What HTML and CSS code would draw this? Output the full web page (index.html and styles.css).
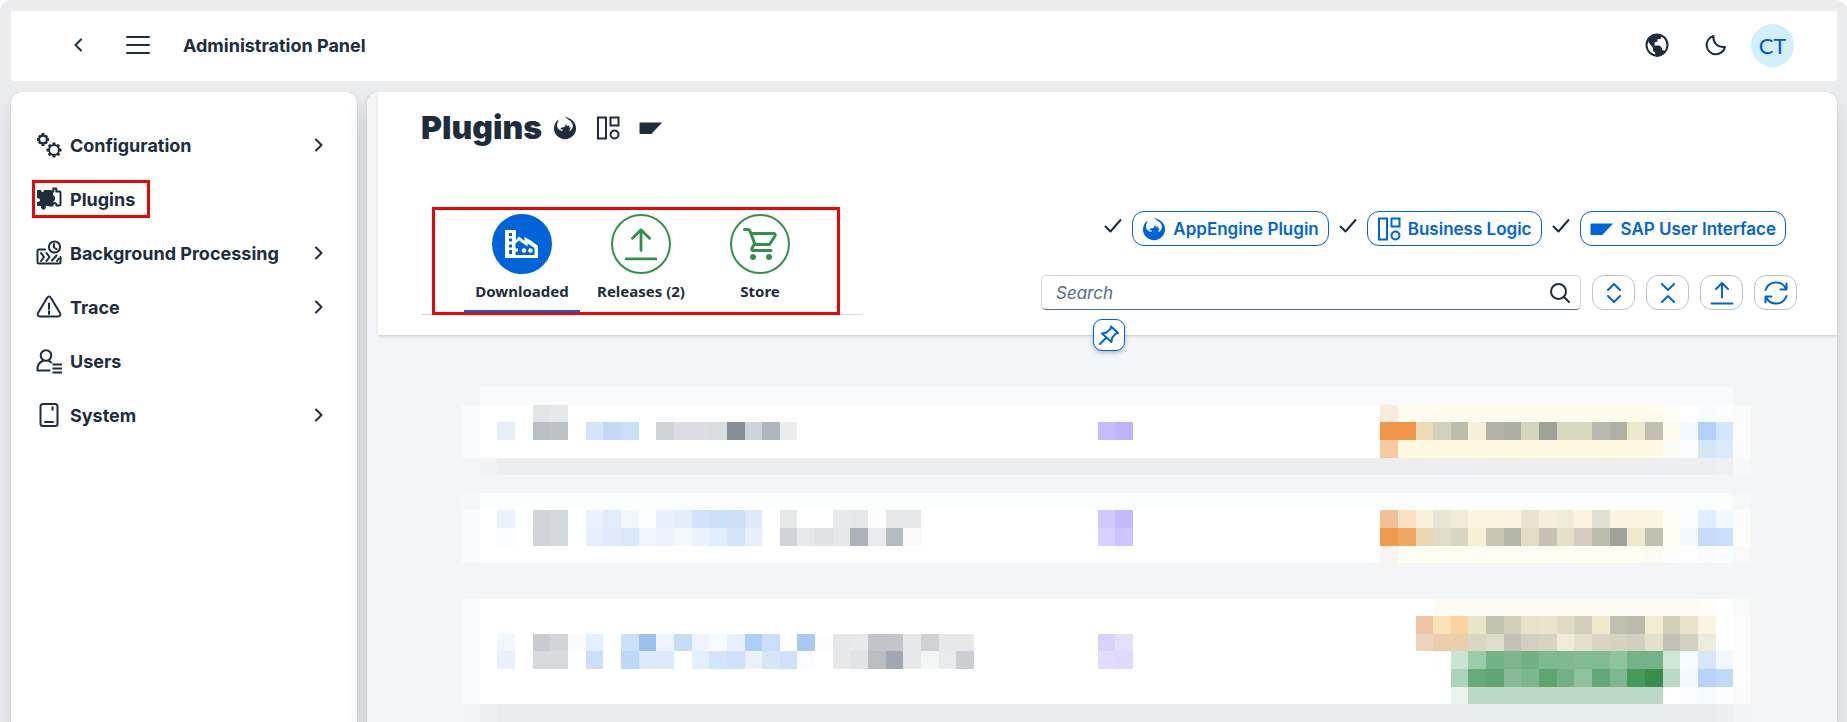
FILE: index.html
```html
<!DOCTYPE html>
<html lang="en">
<head>
<meta charset="utf-8">
<title>Administration Panel</title>
<link rel="stylesheet" href="styles.css">
</head>
<body>
<svg class="defs" aria-hidden="true">
  <symbol id="i-chevron" viewBox="0 0 10 14"><path d="M2 1.500l5.500 5.500L2 12.500"/></symbol>
  <symbol id="i-check" viewBox="0 0 18 16"><path d="M1.500 8.500l5 5L16.500 2"/></symbol>
  <symbol id="i-engine" viewBox="0 0 24 24"><path d="M5.500 3.500C2.700 5.500 1 8.800 1 12.500a11 10.700 0 0 0 22 0c0-4.300-2-7.300-5-9.200C15.800 2 13.500 1.800 12 .3c.7 2.200 2.700 2.700 4.500 4 2.600 1.800 3.800 4.200 3.200 7-.4 1.700-1.500 3-3.200 4l.3-2.300 1.200-1.500-1.700.2.200-2.700-1.900 1.200-1.600-2-1.500 2.700-3 .6-1.500 2 2.700-.3-.3 1.800C6.500 14.500 4.400 12.800 4 10c-.3-2.300.6-4.500 3-6.800L4.500 5.500z"/></symbol>
  <symbol id="i-blocks" viewBox="0 0 24 24"><path d="M2 1.500h8v21H2zM14.500 1.500h8v8h-8z"/><circle cx="18.500" cy="18.500" r="4"/></symbol>
  <symbol id="i-sap" viewBox="0 0 24 24"><path d="M1.500 6.500h21q.8 0 .2.600L13 17.300q-.5.700-1.300.7H1.500q-1 0-1-1v-9.500q0-1 1-1z"/></symbol>
  <symbol id="i-upload" viewBox="0 0 24 24"><path d="M12 16.500V2M6 8l6-6 6 6M1.500 22.500h21"/></symbol>
</svg>

<div class="shell">
  <header class="topbar">
    <button class="icon-btn back" aria-label="Back"><svg class="stroke flip" width="10" height="14"><use href="#i-chevron"/></svg></button>
    <button class="icon-btn menu" aria-label="Menu"><svg class="stroke" width="24" height="20" viewBox="0 0 24 20"><path d="M1 2h22M1 10h22M1 18h22"/></svg></button>
    <span class="topbar-title">Administration Panel</span>
    <button class="icon-btn globe" aria-label="Language"><svg width="24" height="24" viewBox="0 0 24 24"><circle class="stroke" cx="12" cy="12" r="10.500"/><path d="M3 8C5 3.500 9 1.500 14 1.500l2.500 2-1 2.500h-3v2.500l-3 1v3h5l2.500 2.500v2l2.500.5-1 3-4.500 3-3 .5-1-4.500-2-1.500v-3L3.500 9z"/></svg></button>
    <button class="icon-btn moon" aria-label="Dark theme"><svg class="stroke" width="22" height="22" viewBox="0 0 22 22"><path d="M8.500 2C8 8.500 12 13.500 20 13a9.300 9.300 0 1 1-11.500-11z"/></svg></button>
    <button class="avatar" aria-label="Account CT">CT</button>
  </header>

  <div class="columns">
    <nav class="sidebar" aria-label="Administration">
      <a class="nav-item" href="#configuration">
        <svg class="stroke" width="26" height="26" viewBox="0 0 26 26"><circle cx="7" cy="7.500" r="3.800"/><circle cx="18" cy="18" r="4.900"/><path class="teeth" d="M7 1v2M7 12v2M1 7.500h2M11 7.500h2M3 3.500l1.500 1.500M11 3.500L9.500 5M3 11.500L4.500 10M11 11.500L9.500 10M18 10.500V13M18 23v2.500M10.500 18H13M23 18h2.500M12.800 12.800l1.700 1.700M23.200 12.800l-1.700 1.700M12.800 23.200l1.700-1.700M23.200 23.200l-1.700-1.700"/></svg>
        <span>Configuration</span>
        <svg class="stroke more" width="10" height="14"><use href="#i-chevron"/></svg>
      </a>
      <a class="nav-item marked" href="#plugins" aria-current="page">
        <svg width="26" height="26" viewBox="0 0 26 26"><path d="M1 5q0-1 1-1h3q0 2 1.500 2T8 4h5q3 0 4 2v3l2 2v3l-2 2v4H9.500l.5 2-2.500 2L5 22v-2H2q-1 0-1-1v-3q3 0 3-2t-3-2z"/><path class="stroke" d="M13.500 5.500h3.800v-3h3v3h3q1.200 0 1.200 1.200V18q0 1.500-1.500 1.500h-2.500q0-2.500-2-2.500t-2 2.500h-3"/></svg>
        <span>Plugins</span>
      </a>
      <a class="nav-item" href="#background">
        <svg class="stroke" width="26" height="26" viewBox="0 0 26 26"><path d="M9 9.500H3Q1.500 9.500 1.500 11v11q0 1.500 1.500 1.500h20q1.500 0 1.500-1.500v-5"/><circle cx="18.500" cy="7" r="5.600"/><path d="M18 4v3.500l2.500 1.500M5 13l3 4-3 4M10.500 13l3 4-3 4M16 20.500l4.500-5M21 21l2-2.500"/></svg>
        <span>Background Processing</span>
        <svg class="stroke more" width="10" height="14"><use href="#i-chevron"/></svg>
      </a>
      <a class="nav-item" href="#trace">
        <svg class="stroke" width="26" height="26" viewBox="0 0 26 26"><path d="M11 4q2-2.800 4 0l9 15q1.400 3.500-2 3.500H4q-3.400 0-2-3.500zM13 9.500v5.500M13 17.300v2.700"/></svg>
        <span>Trace</span>
        <svg class="stroke more" width="10" height="14"><use href="#i-chevron"/></svg>
      </a>
      <a class="nav-item" href="#users">
        <svg class="stroke" width="26" height="26" viewBox="0 0 26 26"><circle cx="10" cy="7.500" r="5.300"/><path d="M13.500 22.500h-12q-.5-7.500 5.500-9.700M13 12.800q1.500.7 2.300 1.700"/><path class="lines" d="M16.500 16.500h9.500M16.500 20.500h9.500M16.500 24.500h9.500"/></svg>
        <span>Users</span>
      </a>
      <a class="nav-item" href="#system">
        <svg class="stroke" width="26" height="26" viewBox="0 0 26 26"><rect x="4.500" y="2" width="17" height="22" rx="2.500"/><path d="M9 20h8M16.500 5.200v2.600"/></svg>
        <span>System</span>
        <svg class="stroke more" width="10" height="14"><use href="#i-chevron"/></svg>
      </a>
    </nav>

    <main class="content">
      <section class="panel-head">
        <div class="title-row">
          <h1>Plugins</h1>
          <svg width="24" height="24"><use href="#i-engine"/></svg>
          <svg class="stroke sharp" width="24" height="24"><use href="#i-blocks"/></svg>
          <svg width="24" height="24"><use href="#i-sap"/></svg>
        </div>
        <div class="head-body">
          <div class="tabs" role="tablist">
            <button class="tab active" role="tab" aria-selected="true">
              <span class="disc"><svg width="34" height="30" viewBox="0 0 34 30"><path d="M0 1h11v10l3-3.500 5.500 4.500V8l7 4 6.500 5v12H0z"/><path class="hole" d="M4 4h3v3H4zM4 9.500h3v3H4zM4 15.500h3v3H4zM4 21h3v4H4zM10.500 14.500l3.500-3 8.500 6v-3l7 4.500v7H10.500z"/><path d="M9 19.500h4v3H9z"/><circle cx="19" cy="21.500" r="2.200"/><circle cx="25.500" cy="21.500" r="2.200"/></svg></span>
              <span>Downloaded</span>
            </button>
            <button class="tab" role="tab" aria-selected="false">
              <span class="disc"><svg class="stroke" width="34" height="34"><use href="#i-upload"/></svg></span>
              <span>Releases (2)</span>
            </button>
            <button class="tab" role="tab" aria-selected="false">
              <span class="disc"><svg width="34" height="34" viewBox="0 0 34 34"><path class="stroke" d="M1.500 2.500H5q1.500 0 2 1.500l5 13.500h14.500L32 9q.8-2.500-1.500-2.500H8M11 17.500l-2 4q-.8 2 1 2h18"/><circle cx="10" cy="30" r="3"/><circle cx="26" cy="30" r="3"/></svg></span>
              <span>Store</span>
            </button>
          </div>

          <div class="tools">
            <div class="filters">
              <svg class="stroke tick" width="18" height="16"><use href="#i-check"/></svg>
              <button class="pill"><svg width="24" height="24"><use href="#i-engine"/></svg>AppEngine Plugin</button>
              <svg class="stroke tick" width="18" height="16"><use href="#i-check"/></svg>
              <button class="pill"><svg class="stroke sharp" width="24" height="24"><use href="#i-blocks"/></svg>Business Logic</button>
              <svg class="stroke tick" width="18" height="16"><use href="#i-check"/></svg>
              <button class="pill"><svg width="24" height="24"><use href="#i-sap"/></svg>SAP User Interface</button>
            </div>
            <div class="actions">
              <div class="search">
                <input type="text" placeholder="Search" aria-label="Search">
                <button class="icon-btn" aria-label="Run search"><svg class="stroke" width="20" height="20" viewBox="0 0 20 20"><circle cx="8.500" cy="8.500" r="7.500"/><path d="M14 14l5 5"/></svg></button>
              </div>
              <button class="tool" aria-label="Expand all"><svg class="stroke" width="16" height="20" viewBox="0 0 16 20"><path d="M2 7l6-6 6 6M2 13l6 6 6-6"/></svg></button>
              <button class="tool" aria-label="Collapse all"><svg class="stroke" width="16" height="20" viewBox="0 0 16 20"><path d="M2 1l6 6 6-6M2 19l6-6 6 6"/></svg></button>
              <button class="tool" aria-label="Upload"><svg class="stroke" width="24" height="24"><use href="#i-upload"/></svg></button>
              <button class="tool" aria-label="Refresh"><svg class="stroke" width="24" height="24" viewBox="0 0 24 24"><path d="M1.500 9A11 11 0 0 1 22 8M22.500 2.500v6h-6M22.500 15A11 11 0 0 1 2 16M1.500 21.500v-6h6"/></svg></button>
            </div>
          </div>
        </div>
        <button class="pin" aria-label="Pin header"><svg class="stroke" width="20" height="20" viewBox="0 0 20 20"><path d="M1 19l6-6M12 1.500L19 8l-2.500.8-3.500 4L12.500 17 3 8.500 7.500 7.500l4-3.500z"/></svg></button>
      </section>
      <svg class="mosaic" viewBox="-1 0 73 19" preserveAspectRatio="none" role="img" aria-label="Plugin list"></svg>
    </main>
  </div>
</div>
<script src="mosaic.js"></script>
</body>
</html>
```
FILE: styles.css
```css
*, *::before, *::after { box-sizing: border-box; }
html { background: #fff; }
body {
  margin: 0;
  color: #1d2d3e;
  font-family: Inter, "Noto Sans", sans-serif;
  font-size: 18px;
}
button { font: inherit; color: inherit; background: none; border: 0; padding: 0; cursor: pointer; }
svg { display: block; flex: none; fill: currentColor; }
.stroke {
  fill: none;
  stroke: currentColor;
  stroke-width: 2;
  stroke-linecap: round;
  stroke-linejoin: round;
}
.sharp { stroke-linejoin: miter; }
.lines { stroke-linecap: butt; }
.teeth { stroke-width: 3; stroke-linecap: butt; }
.defs { position: absolute; width: 0; height: 0; }

.shell {
  height: 100vh;
  display: flex;
  flex-direction: column;
  gap: 11px;
  padding: 11px 10px 0 11px;
  overflow: hidden;
  background: #ebecee;
  border-radius: 12px 12px 0 0;
}

.topbar {
  position: relative;
  z-index: 1;
  display: flex;
  align-items: center;
  height: 70px;
  flex: none;
  padding: 0 43px 2px 62px;
  background: #fff;
  box-shadow: 0 0 0 11px #ebecee;
}
.icon-btn { display: flex; align-items: center; justify-content: center; }
.flip { transform: scaleX(-1); }
.menu { margin: 0 33px 0 43px; }
.topbar-title { font-weight: 700; }
.globe { margin-left: auto; }
.moon { margin: 0 24px 0 36px; }
.avatar {
  width: 43px;
  height: 43px;
  border-radius: 50%;
  background: #d1efff;
  color: #0057d2;
  font-family: Lato, sans-serif;
  font-size: 22px;
}

.columns { display: flex; gap: 10px; flex: 1; min-height: 0; }
.sidebar, .content {
  border-radius: 11px 11px 0 0;
  box-shadow: 0 0 2px rgba(34, 53, 72, .2), 0 16px 24px rgba(34, 53, 72, .14);
}
.sidebar { flex: none; width: 346px; padding: 26px 33px 0 25px; background: #fff; }
.nav-item {
  position: relative;
  display: flex;
  align-items: center;
  gap: 8px;
  height: 54px;
  color: inherit;
  font-weight: 700;
  text-decoration: none;
}
.more { margin-left: auto; }
.marked::after {
  content: "";
  position: absolute;
  left: -4px;
  top: 8px;
  width: 118px;
  height: 38px;
  border: 3px solid #eb0505;
}

.content { flex: 1; min-width: 0; padding-left: 11px; background: #f4f5f7; overflow: hidden; }
.panel-head {
  position: relative;
  padding: 16px 40px 20px 43px;
  background: #fff;
  border-bottom: 1px solid #d5d8dc;
  border-top-right-radius: 11px;
  box-shadow: 0 1px 3px rgba(34, 53, 72, .12);
}
.title-row { display: flex; align-items: center; gap: 19px; height: 40px; }
h1 { margin: 0 -8px 0 0; font-size: 32px; line-height: 40px; font-weight: 900; }
.head-body { display: flex; justify-content: space-between; margin-top: 59px; }

.tabs {
  position: relative;
  display: flex;
  gap: 3px;
  flex: none;
  width: 440px;
  height: 108px;
  padding-left: 43px;
  border-bottom: 1px solid #d5d8dc;
}
.tabs::after {
  content: "";
  position: absolute;
  left: 11px;
  top: 0;
  width: 408px;
  height: 108px;
  border: 3px solid #eb0505;
  pointer-events: none;
}
.tab {
  display: flex;
  flex-direction: column;
  align-items: center;
  gap: 7px;
  width: 116px;
  padding-top: 7px;
  border-bottom: 4px solid transparent;
  font-family: "Noto Sans", sans-serif;
  font-size: 15px;
  line-height: 20px;
  font-weight: 700;
}
.tab.active { border-bottom-color: #0064d9; }
.disc {
  display: flex;
  align-items: center;
  justify-content: center;
  width: 60px;
  height: 60px;
  border: 2px solid #30914c;
  border-radius: 50%;
  color: #30914c;
}
.tab.active .disc { background: #0064d9; border-color: #0064d9; color: #fff; }
.hole { fill: #0064d9; }
.tab path.stroke { stroke-width: 3; }

.tools { flex: 0 1 756px; padding-top: 4px; }
.filters { display: flex; align-items: center; justify-content: flex-end; gap: 10px; padding-right: 11px; }
.tick { margin-bottom: 6px; }
.pill {
  display: flex;
  align-items: center;
  gap: 7px;
  height: 35px;
  padding: 0 9px;
  border: 1px solid #0064d9;
  border-radius: 12px;
  color: #0064d9;
  font-size: 17px;
  font-weight: 600;
  white-space: nowrap;
}
.actions { display: flex; gap: 11px; margin-top: 29px; }
.search {
  display: flex;
  flex: 1;
  height: 35px;
  padding-right: 10px;
  border: 1px solid #d0d6dc;
  border-bottom-color: #556b81;
  border-radius: 5px;
}
.search input {
  flex: 1;
  min-width: 0;
  padding: 0 14px;
  border: 0;
  outline: 0;
  background: none;
  color: inherit;
  font: inherit;
  font-size: 17px;
}
.search input::placeholder { color: #556b82; font-style: italic; opacity: 1; }
.tool {
  display: flex;
  align-items: center;
  justify-content: center;
  width: 43px;
  height: 35px;
  border: 1px solid #bcc3ca;
  border-radius: 12px;
  color: #0064d9;
}
.pin {
  position: absolute;
  left: 50%;
  bottom: -16px;
  display: flex;
  align-items: center;
  justify-content: center;
  width: 32px;
  height: 32px;
  margin-left: -15px;
  border: 1px solid #0064d9;
  border-radius: 9px;
  background: #fff;
  color: #0064d9;
  box-shadow: 0 2px 4px rgba(34, 53, 72, .3);
}

.mosaic {
  width: calc(100% - 170px);
  height: 335px;
  margin: 51px 86px 0 84px;
  shape-rendering: crispEdges;
}
```
FILE: mosaic.js
```javascript
// One string per mosaic row. "column:colour*count colour ..." draws a run of cells.
const rows = [
  "0:f8fafc*71",
  "-1:f8fafc fff*71 fafcfb|3:e3e4e5 e6e7e8|51:fbebde fefbef*15 fefdfa fff f8fbff fcfdff",
  "-1:f9fbfd fff*71 fcfcfb|1:e5effc|3:b9bfc3 bdc2c6|6:d3e4fb c1d8f6 c9dff7|10:cfd3d5 dcdde1*2 d9dcde 858d97 cfd2d7 b0b4be ebecee|35:c7bbff bfb2ff|51:f09648*2 ecdab7 d3d1bd bbbdad f7f0d8 b2b2a5 aeafa3 d7d6bd 9da198 d9d8c0*2 b6b9ac adb0a3 ece8ce c3bfb1 fffbec f4f9ff b3d1f8 d4e6fd",
  "-1:f9fbfd fff*71 fafbfb|51:f5caa2 fff8e1*15 fcfaf6 fbfdff d5e6f9 dce9fb",
  "0:f1f2f4 edeef0*69 eff0f1 f7f8f9",
  "",
  "-1:f6f7f9 fcfdfd*71 f6f8f9",
  "-1:f8fafc fff*71 fafcfb|1:e9f2fd|3:d1d5da d4d8da|6:eaf3fd e0ecfa f1f6ff fcfeff e8f0fd e3eefb d1e3fb cbe0f8 cfe0f6 deeafa|17:e6e7e8|20:e8e9ea e6e7e8 fdfdfd e6e7e8*2|35:d2c8ff c4b8ff|51:f2c096 f9e1c2 f8f1de e7e7d5 efecda fbf4de*3 e7e4d4 f8eedd efedda fbf5e0 e1dfcf fbf4de*3 fffef5 f9fdff e0edff f1f9ff",
  "-1:f9fbfd fff*71 fcfcfb|1:fbfdff|3:d1d5da d4d8da|6:e4effa dfebfa dbe8fb f1f5ff edf3fd f4f9fd eaf2fd e0edfc d5e4f8 e4effa|17:d0d4d9 e8e9ea dfe3e5 e7e8e9 adb2bc e9eaec b5bcc1 f9f9f9|35:d9d0ff cec4ff|51:f09a4b f3a562 ead7b2 e1dcc6 d7d6c1 f7f0d5 c8c6b5 b5b7a9 e2dcc3 c5c2b4 e7dfc7 d3cebd bcbdac 9fa298 efe7cf c1c1b0 fffdef f4f8ff c5dbf9 c8defb",
  "-1:f8fafc fff*71 f9f9f9|51:f9f4ef fffdf1*14 fdfaf3 fefdfd fff f8fbff fcfdff",
  "", "",
  "-1:f8fafc fff*71 f8faf9|54:fcfcf5*15 fefdfa",
  "-1:f9fbfd fff*71 fcfcfc|53:f0c4a7 fbe3b7 fbd39f e9e5c7 c4c3b0 d2d0bb e9e1c8 e9e5ca e1dbc4 d2cfba efe8ca bebfae babbab f3ebcf d1cfb9 e9e2c9 faf3df",
  "-1:f9fbfd fff*71 fcfcfc|1:f2f6ff|3:c8cbd0 d1d5d7 fafbff e4effc fcfeff cddff8 9cc1f0 edf4fd c7ddf6 edf4fd f7faff e8f0fd b0cff5 c9def8 fff a8caf2 fdfdff|20:e6e7e8 e8e9ea c1c4c9 c3c5cb e6e7e8 cfd3d6 e7e8ea e8e8e9|35:d9d2ff e6e0ff|53:f0d3bf ebcdab e9d0aa d9d8c6 dedccc c2c2b9 d3d0c1 d5d4c3 f2ead8 e4e0ce d9d5c5 d5d2c0 d1cfc0 e2e0cf c1c1b5 d3d1c1 edeade",
  "-1:f9fbfd fff*71 fcfcfc|1:e8f0ff|3:d7dbdd*2|6:cbdff8|8:bdd7f6 dceafb*2|12:e4effc d2e3fb cfe1f9 e9f1fd d7e6f6 cfe1f9 fafcff|20:e7e8e9 e2e3e5 b8bec2 a2a8b3 e6e7e9 f4f5f5 e9eaeb cbced4|35:e3dcff e0d8ff|54:fefefe c9e4d2 9ccba9 73b286 7db58e 70b184 7fb991*2 83bb94 82ba93 8fc49f 74b287*2 d0e6d7 f8fbff d7e6fb f1f8ff",
  "-1:f9fbfd fff*71 fdfdfd|55:abd4ba 65aa79 60a675 88ba97 7cb78f 5ea572 74b086 8fc19f 63a878 7fb790 459b5b 378e4e bbd9c4 f5f9ff b7d3f8 c2daf9",
  "-1:f8fafc fff*71 fafafa|55:eaf4ed bbd9c4*11|68:fdfdff f8fbff fcfdff",
  "-1:f3f4f6 eeeff1 ebecee*69 edeeef f2f3f5"
];

const mosaic = document.querySelector(".mosaic");
const NS = "http://www.w3.org/2000/svg";

rows.forEach((row, y) => {
  if (!row) return;
  row.split("|").forEach(run => {
    const [start, cells] = run.split(":");
    let x = Number(start);
    cells.split(" ").forEach(cell => {
      const [colour, count = "1"] = cell.split("*");
      const rect = document.createElementNS(NS, "rect");
      rect.setAttribute("x", x);
      rect.setAttribute("y", y);
      rect.setAttribute("width", count);
      rect.setAttribute("height", 1);
      rect.setAttribute("fill", "#" + colour);
      mosaic.append(rect);
      x += Number(count);
    });
  });
});
```
